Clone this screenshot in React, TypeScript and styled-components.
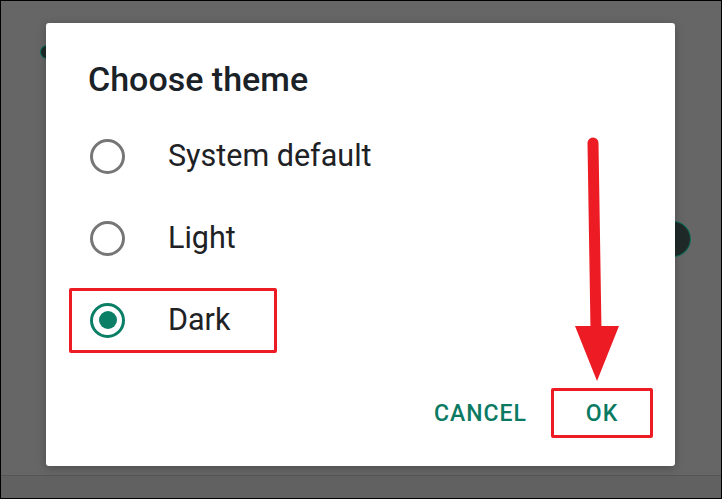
import React, { useState } from 'react';
import styled, { createGlobalStyle } from 'styled-components';

const GlobalStyle = createGlobalStyle`
  body {
    margin: 0;
    font-family: Roboto, "Noto Sans", sans-serif;
  }
`;

const themes = ['System default', 'Light', 'Dark'];

export default function App() {
    const [selected, setSelected] = useState('Dark');

    return (
        <>
            <GlobalStyle/>
            <Screen>
                <BgDot $left={40} $top={45} $size={12}/>
                <BgDot $left={655} $top={221} $size={34}/>
                <Dialog>
                    <Title>Choose theme</Title>
                    <Options>
                        {themes.map(t => (
                            <Row key={t}>
                                <Option $marked={t === 'Dark'} onClick={() => setSelected(t)}>
                                    <Radio $checked={t === selected}/>
                                    <Label>{t}</Label>
                                </Option>
                            </Row>
                        ))}
                    </Options>
                    <Actions>
                        <ActionButton>Cancel</ActionButton>
                        <ActionButton $marked>OK</ActionButton>
                    </Actions>
                </Dialog>
                <BottomStrip/>
                <Arrow width="722" height="499" viewBox="0 0 722 499">
                    <path d="M593 143 L596 330" stroke="#ed1c24" strokeWidth="11" strokeLinecap="round" fill="none"/>
                    <polygon points="575,326 619,326 597,381" fill="#ed1c24"/>
                </Arrow>
            </Screen>
        </>
    );
}

const Screen = styled.div`
  position: relative;
  box-sizing: border-box;
  width: 722px;
  height: 499px;
  border: 1px solid #000;
  background: #666;
  overflow: hidden;
  display: flex;
  flex-direction: column;
  padding: 22px 0 0 45px;
`;

const BgDot = styled.div<{ $left: number; $top: number; $size: number }>`
  position: absolute;
  left: ${p => p.$left}px;
  top: ${p => p.$top}px;
  width: ${p => p.$size}px;
  height: ${p => p.$size}px;
  border-radius: 50%;
  background: #1f2a28;
  box-shadow: 0 0 0 1px #0b6d5a;
`;

const Dialog = styled.div`
  position: relative;
  z-index: 1;
  box-sizing: border-box;
  width: 629px;
  height: 443px;
  background: #fff;
  border-radius: 3px;
  box-shadow: 0 2px 10px rgba(0, 0, 0, .25);
  display: flex;
  flex-direction: column;
  padding-top: 36px;
`;

const Title = styled.h2`
  margin: 0 0 16px 42px;
  font-size: 34px;
  line-height: 40px;
  font-weight: 500;
  color: #1a2228;
`;

const Options = styled.div`
  display: flex;
  flex-direction: column;
`;

const Row = styled.div`
  height: 82px;
  display: flex;
  align-items: center;
`;

const Option = styled.div<{ $marked?: boolean }>`
  box-sizing: border-box;
  height: 65px;
  margin-left: 23px;
  padding: 0 44px 0 18px;
  display: flex;
  align-items: center;
  gap: 43px;
  border: 3px solid ${p => (p.$marked ? '#ed1c24' : 'transparent')};
  border-radius: 2px;
  cursor: pointer;
`;

const Radio = styled.span<{ $checked?: boolean }>`
  box-sizing: border-box;
  width: 35px;
  height: 35px;
  border-radius: 50%;
  border: 3.5px solid ${p => (p.$checked ? '#0a7f66' : '#767676')};
  display: flex;
  align-items: center;
  justify-content: center;

  &::after {
    content: "";
    width: 18px;
    height: 18px;
    border-radius: 50%;
    background: #0a7f66;
    display: ${p => (p.$checked ? 'block' : 'none')};
  }
`;

const Label = styled.span`
  font-size: 30.5px;
  color: #202124;
  line-height: 1;
`;

const Actions = styled.div`
  margin-top: 27px;
  padding-right: 22px;
  display: flex;
  justify-content: flex-end;
  align-items: center;
  gap: 5px;
`;

const ActionButton = styled.button<{ $marked?: boolean }>`
  box-sizing: border-box;
  height: 50px;
  min-width: ${p => (p.$marked ? '102px' : '0')};
  padding: 0 16px;
  border: 3px solid ${p => (p.$marked ? '#ed1c24' : 'transparent')};
  border-radius: 2px;
  background: transparent;
  font-family: Roboto, sans-serif;
  font-size: 23px;
  font-weight: 500;
  letter-spacing: 1px;
  text-transform: uppercase;
  color: #0a7a62;
  cursor: pointer;
`;

const BottomStrip = styled.div`
  margin: 9px 0 0 -45px;
  flex: 1;
  border-top: 1px solid #555;
  background: #616161;
`;

const Arrow = styled.svg`
  position: absolute;
  left: -1px;
  top: -1px;
  z-index: 2;
  pointer-events: none;
`;
